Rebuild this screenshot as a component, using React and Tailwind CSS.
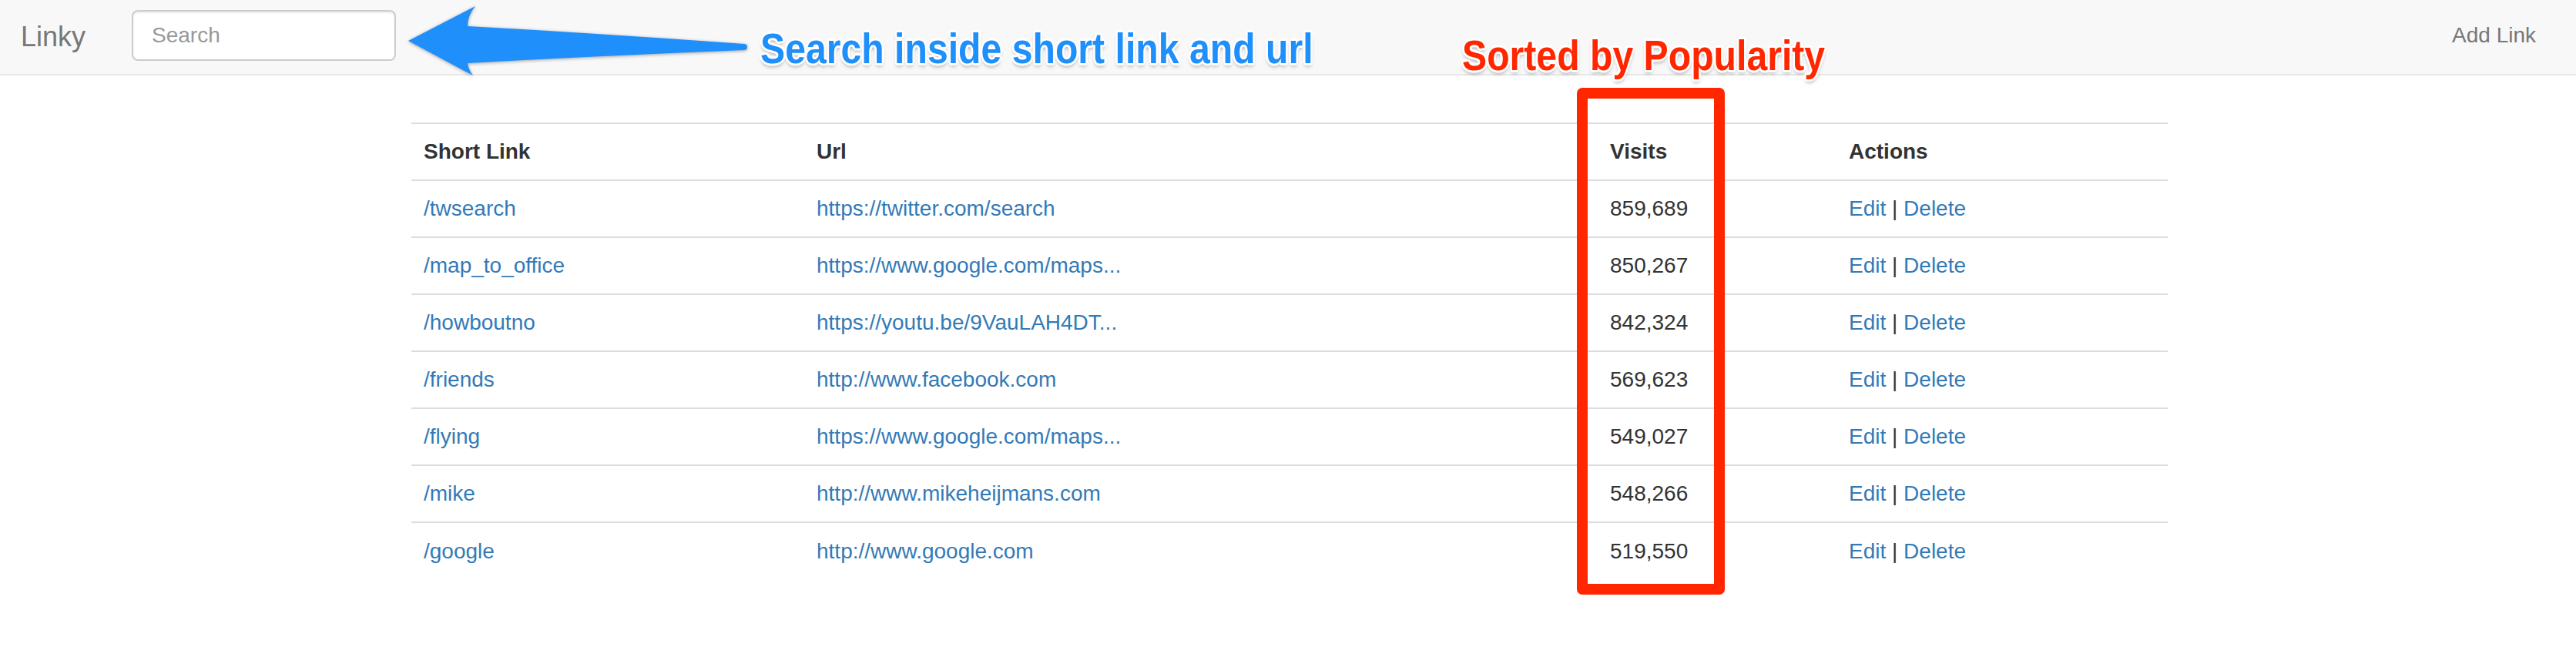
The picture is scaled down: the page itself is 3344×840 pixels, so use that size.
import React from 'react'

// 链接列表数据（按访问量排序）
const links = [
    { short: "/twsearch", url: "https://twitter.com/search", visits: "859,689" },
    { short: "/map_to_office", url: "https://www.google.com/maps...", visits: "850,267" },
    { short: "/howboutno", url: "https://youtu.be/9VauLAH4DT...", visits: "842,324" },
    { short: "/friends", url: "http://www.facebook.com", visits: "569,623" },
    { short: "/flying", url: "https://www.google.com/maps...", visits: "549,027" },
    { short: "/mike", url: "http://www.mikeheijmans.com", visits: "548,266" },
    { short: "/google", url: "http://www.google.com", visits: "519,550" },
];

const outline = "[text-shadow:0_0_2px_#fff,3px_0_0_#fff,-3px_0_0_#fff,0_3px_0_#fff,0_-3px_0_#fff,2px_2px_0_#fff,-2px_-2px_0_#fff,2px_-2px_0_#fff,-2px_2px_0_#fff,0_4px_6px_rgba(0,0,0,0.35)]";

const Navbar = () => {
    return (
        <nav className="h-[98px] bg-[#f8f8f8] border-b-2 border-[#e7e7e7] flex items-start">
            <span className="ml-[27px] mt-[26px] text-[36px] leading-[44px] text-[#777]">Linky</span>
            <input
                type="text"
                placeholder="Search"
                className="ml-[60px] mt-[13px] w-[343px] h-[66px] px-[24px] bg-white border-2 border-[#ccc] rounded-[8px] text-[28px] text-[#555] placeholder:text-[#999] shadow-[inset_0_2px_2px_rgba(0,0,0,0.075)] outline-none"
            />
            <a className="ml-auto mr-[52px] mt-[28px] text-[28px] leading-[36px] text-[#777]">Add Link</a>
        </nav>
    )
}

const LinkTable = () => {
    return (
        <div className="ml-[534px] mt-[61px] w-[2280px]">
            <table className="w-full table-fixed border-collapse text-[28px] leading-[40px] text-[#333]">
                <colgroup>
                    <col className="w-[510px]" />
                    <col className="w-[1030px]" />
                    <col className="w-[310px]" />
                    <col className="w-[430px]" />
                </colgroup>
                <thead>
                    <tr className="border-t-2 border-[#ddd]">
                        <th className="h-[74px] px-[16px] text-left font-bold">Short Link</th>
                        <th className="px-[16px] text-left font-bold">Url</th>
                        <th className="px-[16px] text-left font-bold">Visits</th>
                        <th className="px-[16px] text-left font-bold">Actions</th>
                    </tr>
                </thead>
                <tbody>
                    {links.map((link) => (
                        <tr key={link.short} className="border-t-2 border-[#ddd]">
                            <td className="h-[74px] px-[16px] text-[#337ab7]">{link.short}</td>
                            <td className="px-[16px] text-[#337ab7] whitespace-nowrap">{link.url}</td>
                            <td className="px-[16px]">{link.visits}</td>
                            <td className="px-[16px] whitespace-nowrap">
                                <a className="text-[#337ab7]">Edit</a> | <a className="text-[#337ab7]">Delete</a>
                            </td>
                        </tr>
                    ))}
                </tbody>
            </table>
        </div>
    )
}

const App = () => {
    return (
        <div className="relative w-full h-[840px] bg-white overflow-hidden font-['Liberation_Sans',Arial,sans-serif]">
            <Navbar />
            <LinkTable />

            {/* 标注：箭头 */}
            <svg
                className="absolute left-0 top-0 drop-shadow-[0_1px_2px_rgba(0,0,0,0.35)]"
                width="1000"
                height="110"
                viewBox="0 0 1000 110"
            >
                <path
                    d="M530 53 L617 8 Q607 20 607 34 Q790 44 966 57 A4 4 0 0 1 966 65 Q790 72 607 82 Q608 90 614 98 Z"
                    fill="#1f8ffb"
                />
            </svg>
            <div className={`absolute left-[987px] top-[36px] text-[55px] leading-[55px] font-bold text-[#1f8ffb] whitespace-nowrap origin-left scale-x-[0.876] ${outline}`}>
                Search inside short link and url
            </div>

            {/* 标注：排序 */}
            <div className={`absolute left-[1898px] top-[45px] text-[55px] leading-[55px] font-bold text-[#ff2600] whitespace-nowrap origin-left scale-x-[0.876] ${outline}`}>
                Sorted by Popularity
            </div>
            <div className="absolute left-[2047px] top-[114px] w-[192px] h-[658px] border-[14px] border-[#ff2600] rounded-[7px]" />
        </div>
    )
}

export default App
